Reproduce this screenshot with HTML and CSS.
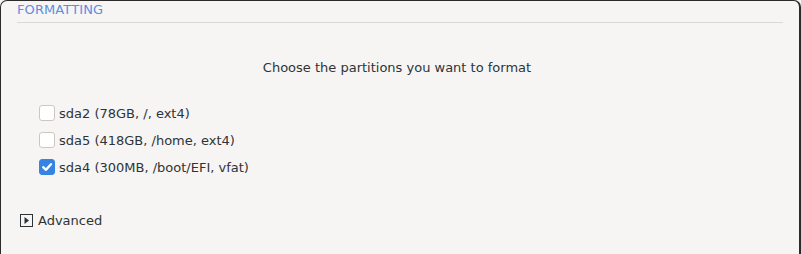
FILE: index.html
```html
<!DOCTYPE html>
<html>
<head>
<meta charset="utf-8">
<link rel="stylesheet" href="styles.css">
</head>
<body>
<div class="window">
  <div class="header">
    <div class="title">FORMATTING</div>
    <div class="sep"></div>
  </div>
  <div class="prompt">Choose the partitions you want to format</div>
  <div class="list">
    <label class="row"><span class="check"></span><span>sda2 (78GB, /, ext4)</span></label>
    <label class="row"><span class="check"></span><span>sda5 (418GB, /home, ext4)</span></label>
    <label class="row"><span class="check checked"><svg width="16" height="16" viewBox="0 0 16 16"><path d="M4.2 8.2 L7 10.8 L12 5.2" fill="none" stroke="#fff" stroke-width="2.4" stroke-linecap="round" stroke-linejoin="round"/></svg></span><span>sda4 (300MB, /boot/EFI, vfat)</span></label>
  </div>
  <div class="advanced"><span class="expander"><svg width="13" height="13" viewBox="0 0 13 13"><rect x="0.5" y="0.5" width="12" height="12" fill="none" stroke="#2e3436"/><path d="M4.5 3 L9 6.5 L4.5 10 Z" fill="#2e3436"/></svg></span><span>Advanced</span></div>
</div>
</body>
</html>
```
FILE: styles.css
```css
html, body {
  margin: 0;
  padding: 0;
  background: #f6f5f4;
}
body {
  width: 801px;
  height: 254px;
  overflow: hidden;
  font-family: "DejaVu Sans", sans-serif;
  font-size: 13px;
  color: #2e3436;
}
.window {
  box-sizing: border-box;
  width: 801px;
  height: 262px;
  border: 1px solid #2b2b2b;
  border-right-width: 2px;
  border-radius: 7px 7px 0 0;
  background: #f6f5f4;
  padding: 0 16px 0 16px;
}
.header {
  display: flex;
  flex-direction: column;
}
.title {
  color: #5b8ee0;
  font-size: 13px;
  line-height: 15px;
  margin-top: 1px;
  letter-spacing: 0.1px;
}
.sep {
  height: 1px;
  background: #d9d8d6;
  margin-top: 5px;
}
.prompt {
  text-align: center;
  margin-top: 37px;
  margin-right: 6px;
  line-height: 16px;
}
.list {
  display: flex;
  flex-direction: column;
  gap: 11px;
  margin-top: 29px;
  padding-left: 22px;
}
.row {
  display: flex;
  align-items: center;
  gap: 4px;
  height: 16px;
}
.check {
  box-sizing: border-box;
  width: 16px;
  height: 16px;
  border: 1px solid #cdc7c2;
  border-radius: 3px;
  background: #fff;
  display: flex;
}
.check.checked {
  background: #3584e4;
  border-color: #3584e4;
}
.check.checked svg {
  margin: -1px;
}
.advanced {
  display: flex;
  align-items: center;
  gap: 5px;
  margin-top: 37px;
  padding-left: 3px;
  height: 16px;
}
.expander {
  display: flex;
}
```
